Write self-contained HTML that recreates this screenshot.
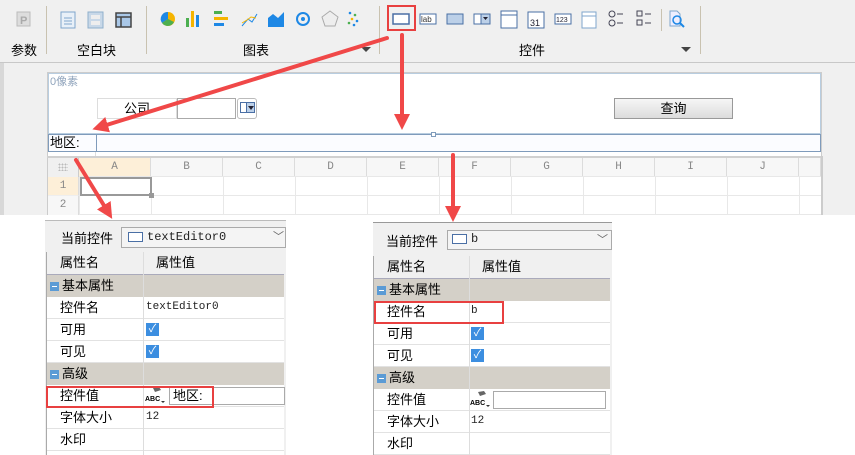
<!DOCTYPE html>
<html><head><meta charset="utf-8"><style>
*{margin:0;padding:0;box-sizing:border-box}
body{width:855px;height:455px;overflow:hidden;position:relative;background:#fff;font-family:"Liberation Sans","Noto Sans CJK SC",sans-serif;font-size:12px;color:#000}
.a{position:absolute}
.tb{left:0;top:0;width:855px;height:63px;background:#f0f0f0;border-bottom:1px solid #c8c8c8}
.vs{width:1px;background:#c9c2b0;top:6px;height:48px}
.lbl{top:40px;font-size:13px}
.cv{left:0;top:63px;width:855px;height:152px;background:#f0f0f0}
.ghd{background:#f7f7f7;color:#888;font-family:"Liberation Mono",monospace;text-align:center;line-height:19px;font-size:11px;border-right:1px solid #dcdcdc;height:19px}
.row{position:absolute;left:0;width:100%;border-bottom:1px solid #e2e2e2;line-height:21px;font-size:13px}
.grp{background:#d4d0c8;border-bottom:none}
.minus{display:inline-block;width:9px;height:9px;background:#5b9bd5;vertical-align:-1px;margin:0 3px 0 3px;position:relative}
.minus:after{content:"";position:absolute;left:2px;top:4px;width:5px;height:1px;background:#fff}
.chk{position:absolute;width:13px;height:13px;background:#3c8ee0;top:4px;color:#fff;font-size:11px;line-height:13px;text-align:center}
.mono{font-family:"Liberation Mono",monospace;font-size:11px;color:#222}
.abc{position:absolute;top:1px;width:22px;height:20px}
</style></head><body>
<div class="a tb"></div>
<div class="a vs" style="left:46px"></div>
<div class="a vs" style="left:146px"></div>
<div class="a vs" style="left:379px"></div>
<div class="a vs" style="left:700px"></div>
<div class="a vs" style="left:661px;height:22px;top:9px"></div>
<div class="a lbl" style="left:11px">参数</div>
<div class="a lbl" style="left:77px">空白块</div>
<div class="a lbl" style="left:243px">图表</div>
<div class="a lbl" style="left:519px">控件</div>
<div class="a" style="left:361px;top:47px;border:5px solid transparent;border-top:5px solid #444"></div>
<div class="a" style="left:681px;top:47px;border:5px solid transparent;border-top:5px solid #444"></div>
<svg class="a" style="left:0;top:0" width="855" height="40">
<rect x="17" y="12" width="13" height="14" fill="#ddd" stroke="#bbb"/><text x="20" y="24" font-size="11" fill="#aaa" font-weight="bold">P</text>
<rect x="61" y="12" width="14" height="16" fill="#e8f0f8" stroke="#7fa6cc"/><line x1="64" y1="18" x2="72" y2="18" stroke="#7fa6cc"/><line x1="64" y1="21" x2="72" y2="21" stroke="#7fa6cc"/><line x1="64" y1="24" x2="72" y2="24" stroke="#7fa6cc"/>
<rect x="88" y="12" width="15" height="16" fill="#c8d8e8" stroke="#8fb0cc"/><rect x="91" y="15" width="9" height="4" fill="#eee"/><rect x="91" y="21" width="9" height="4" fill="#eee"/>
<rect x="116" y="13" width="15" height="14" fill="#aac8e8" stroke="#444" stroke-width="1.5"/><line x1="116" y1="17" x2="131" y2="17" stroke="#444" stroke-width="1.5"/><line x1="121" y1="17" x2="121" y2="27" stroke="#444" stroke-width="1.5"/>
<circle cx="168" cy="19" r="7" fill="#f5b400"/><path d="M168 19 L168 12 A7 7 0 0 0 162 23 Z" fill="#1e88e5"/><path d="M168 19 L162 23 A7 7 0 0 0 174 22 Z" fill="#4caf50"/>
<rect x="186" y="18" width="3" height="9" fill="#4caf50"/><rect x="191" y="11" width="3" height="16" fill="#f5b400"/><rect x="196" y="15" width="3" height="12" fill="#1e88e5"/>
<rect x="214" y="11" width="8" height="3" fill="#4caf50"/><rect x="214" y="17" width="14" height="3" fill="#f5b400"/><rect x="214" y="23" width="10" height="3" fill="#1e88e5"/>
<path d="M242 26 L248 19 L252 22 L257 14" stroke="#1e88e5" fill="none"/><path d="M242 23 L247 20 L251 17 L256 18" stroke="#f5b400" fill="none"/>
<path d="M268 27 L268 18 L273 14 L278 18 L284 12 L284 27Z" fill="#1e88e5"/>
<circle cx="303" cy="19" r="6" fill="none" stroke="#1e88e5" stroke-width="2"/><circle cx="303" cy="19" r="2" fill="#1e88e5"/>
<polygon points="330,11 338,17 335,26 325,26 322,17" fill="#eee" stroke="#aaa"/>
<circle cx="350" cy="13" r="1.3" fill="#1e88e5"/><circle cx="355" cy="15" r="1.3" fill="#4caf50"/><circle cx="352" cy="19" r="1.3" fill="#f5b400"/><circle cx="357" cy="21" r="1.3" fill="#1e88e5"/><circle cx="349" cy="23" r="1.3" fill="#4caf50"/><circle cx="354" cy="25" r="1.3" fill="#1e88e5"/>
<rect x="393" y="14" width="16" height="10" fill="#fff" stroke="#4a6fa5" stroke-width="1.5"/>
<rect x="420" y="14" width="16" height="10" fill="#fff" stroke="#4a6fa5"/><text x="421" y="22" font-size="8" fill="#333">lab</text>
<rect x="447" y="14" width="16" height="10" fill="#bcd0e8" stroke="#4a6fa5"/>
<rect x="474" y="14" width="16" height="10" fill="#fff" stroke="#4a6fa5"/><rect x="481" y="14" width="9" height="10" fill="#bcd0e8" stroke="#4a6fa5"/><path d="M483 17 L488 17 L485.5 20Z" fill="#223"/>
<rect x="501" y="11" width="16" height="17" fill="#fff" stroke="#4a6fa5"/><line x1="501" y1="15" x2="517" y2="15" stroke="#4a6fa5"/>
<rect x="528" y="12" width="16" height="16" fill="#fff" stroke="#4a6fa5"/><text x="530" y="26" font-size="9" fill="#223">31</text>
<rect x="555" y="14" width="16" height="10" fill="#fff" stroke="#4a6fa5"/><text x="556" y="22" font-size="7" fill="#223">123</text>
<rect x="582" y="12" width="14" height="16" fill="#fff" stroke="#7fa6cc"/><line x1="582" y1="16" x2="596" y2="16" stroke="#7fa6cc"/>
<circle cx="612" cy="14" r="3" fill="none" stroke="#445"/><circle cx="612" cy="23" r="3" fill="none" stroke="#445"/><line x1="617" y1="14" x2="623" y2="14" stroke="#445"/><line x1="617" y1="23" x2="623" y2="23" stroke="#445"/>
<rect x="637" y="11" width="5" height="5" fill="none" stroke="#445"/><rect x="637" y="20" width="5" height="5" fill="none" stroke="#445"/><line x1="645" y1="14" x2="651" y2="14" stroke="#445"/><line x1="645" y1="23" x2="651" y2="23" stroke="#445"/>
<path d="M670 11 L677 11 L680 14 L680 26 L670 26Z" fill="#eef" stroke="#7fa6cc"/><circle cx="677" cy="20" r="4" fill="none" stroke="#1e88e5" stroke-width="1.5"/><line x1="680" y1="23" x2="684" y2="27" stroke="#1e88e5" stroke-width="2"/>
<rect x="388" y="6" width="27" height="24" fill="none" stroke="#e84040" stroke-width="2"/>
</svg>
<div class="a cv"></div>
<div class="a" style="left:0;top:63px;width:4px;height:152px;background:#d8d8d8"></div>
<div class="a" style="left:47px;top:72px;width:775px;height:143px;background:#fff;border:1px solid #ccc"></div>
<div class="a" style="left:48px;top:73px;width:773px;height:61px;border:1px solid #b8cde0;background:#fff"></div>
<div class="a" style="left:50px;top:73px;color:#90a4bc;font-size:11px">0像素</div>
<div class="a" style="left:97px;top:98px;width:80px;height:21px;border:1px solid #ddd;text-align:center;line-height:20px;font-size:13px">公司</div>
<div class="a" style="left:177px;top:98px;width:59px;height:21px;border:1px solid #aaa"></div>
<div class="a" style="left:237px;top:98px;width:20px;height:21px;border:1px solid #bbb;border-radius:3px"></div>
<div class="a" style="left:240px;top:102px;width:15px;height:11px;border:1px solid #4a6fa5;background:#fff"></div>
<div class="a" style="left:246px;top:102px;width:9px;height:11px;background:#bcd0e8;border:1px solid #4a6fa5"></div>
<div class="a" style="left:248px;top:106px;border:3px solid transparent;border-top:4px solid #223"></div>
<div class="a" style="left:614px;top:98px;width:119px;height:21px;border:1px solid #999;background:linear-gradient(#f6f6f6,#dcdcdc);text-align:center;line-height:19px;font-size:13px">查询</div>
<div class="a" style="left:48px;top:134px;width:773px;height:18px;border:1px solid #7f9bbb;background:#fbfcff"></div>
<div class="a" style="left:96px;top:134px;width:1px;height:18px;background:#7f9bbb"></div>
<div class="a" style="left:50px;top:134px;font-size:13px;line-height:18px">地区:</div>
<div class="a" style="left:431px;top:132px;width:5px;height:5px;border:1px solid #7f9bbb;background:#fff"></div>
<div class="a" style="left:48px;top:152px;width:48px;height:5px;border-right:1px solid #ddd"></div>
<div class="a" style="left:47px;top:156px;width:775px;height:2px;background:#d0d0d0"></div>
<div class="a" style="left:48px;top:158px;width:31px;height:19px;background:#f0f0f0;border-right:1px solid #ccc"></div>
<div class="a" style="left:58px;top:163px;width:10px;height:8px;background:radial-gradient(circle,#bbb 0.8px,transparent 1px) 0 0/3px 3px"></div>
<div class="a ghd" style="left:79px;top:158px;width:72px;background:#fdefd8;border-bottom:1px solid #f0c890">A</div>
<div class="a ghd" style="left:151px;top:158px;width:72px">B</div>
<div class="a ghd" style="left:223px;top:158px;width:72px">C</div>
<div class="a ghd" style="left:295px;top:158px;width:72px">D</div>
<div class="a ghd" style="left:367px;top:158px;width:72px">E</div>
<div class="a ghd" style="left:439px;top:158px;width:72px">F</div>
<div class="a ghd" style="left:511px;top:158px;width:72px">G</div>
<div class="a ghd" style="left:583px;top:158px;width:72px">H</div>
<div class="a ghd" style="left:655px;top:158px;width:72px">I</div>
<div class="a ghd" style="left:727px;top:158px;width:72px">J</div>
<div class="a ghd" style="left:799px;top:158px;width:22px"></div>
<div class="a ghd" style="left:48px;top:177px;width:31px;background:#fdefd8;border-bottom:1px solid #eee">1</div>
<div class="a ghd" style="left:48px;top:196px;width:31px;background:#f7f7f7">2</div>
<div class="a" style="left:79px;top:176px;width:742px;height:39px;background:linear-gradient(to right,#e8e8e8 1px,transparent 1px) 72px 0/72px 100%,linear-gradient(#e8e8e8 1px,transparent 1px) 0 19px/100% 19px"></div>
<div class="a" style="left:80px;top:177px;width:72px;height:19px;border:2px solid #999"></div>
<div class="a" style="left:149px;top:193px;width:5px;height:5px;background:#999"></div>
<div class="a" style="left:821px;top:156px;width:2px;height:59px;background:#ccc"></div>

<!-- left panel -->
<div class="a" style="left:45px;top:220px;width:241px;height:235px;background:#f0f0f0">
 <div class="a" style="left:0;top:0;width:241px;height:1px;background:#bbb"></div>
 <div class="a" style="left:16px;top:8px;font-size:13px">当前控件</div>
 <div class="a" style="left:76px;top:7px;width:165px;height:21px;border:1px solid #aaa;background:#f4f4f4"></div>
 <div class="a" style="left:83px;top:12px;width:15px;height:10px;border:1px solid #4a6fa5;background:#fff"></div>
 <div class="a mono" style="left:102px;top:10px;font-size:12px;color:#222">textEditor0</div>
 <div class="a" style="left:228px;top:8px;color:#666;font-size:11px">﹀</div>
 <div class="a" style="left:1px;top:32px;width:238px;height:203px;background:#fff;border-left:1px solid #aaa">
  <div class="row" style="top:0;height:23px;background:#f0f0f0;border-bottom:1px solid #aab;line-height:22px"><span class="a" style="left:13px">属性名</span><span class="a" style="left:109px">属性值</span></div>
  <div class="row grp" style="top:23px;height:22px"><span class="minus"></span>基本属性</div>
  <div class="row" style="top:45px;height:22px"><span class="a" style="left:13px">控件名</span><span class="a mono" style="left:99px">textEditor0</span></div>
  <div class="row" style="top:67px;height:22px"><span class="a" style="left:13px">可用</span><span class="chk" style="left:99px">✓</span></div>
  <div class="row" style="top:89px;height:22px"><span class="a" style="left:13px">可见</span><span class="chk" style="left:99px">✓</span></div>
  <div class="row grp" style="top:111px;height:22px"><span class="minus"></span>高级</div>
  <div class="row" style="top:133px;height:22px"><span class="a" style="left:13px">控件值</span>
   <svg class="abc" style="left:98px" width="22" height="20"><path d="M8 2 L14 1 L16 4 L10 6Z" fill="#666"/><text x="0" y="15" font-size="7" font-weight="bold" font-family="Liberation Sans">ABC</text><path d="M16 15 L20 15 L18 17Z" fill="#333"/></svg>
   <span class="a" style="left:122px;top:2px;width:116px;height:18px;border:1px solid #aaa;line-height:16px;padding-left:3px">地区:</span></div>
  <div class="row" style="top:155px;height:22px"><span class="a" style="left:13px">字体大小</span><span class="a mono" style="left:99px">12</span></div>
  <div class="row" style="top:177px;height:22px"><span class="a" style="left:13px">水印</span></div>
  <div class="a" style="left:96px;top:0;width:1px;height:203px;background:#ddd"></div>
 </div>
 <div class="a" style="left:1px;top:166px;width:168px;height:22px;border:2px solid #e84040"></div>
</div>

<!-- right panel -->
<div class="a" style="left:373px;top:222px;width:239px;height:233px;background:#f0f0f0">
 <div class="a" style="left:0;top:0;width:239px;height:1px;background:#999"></div>
 <div class="a" style="left:13px;top:9px;font-size:13px">当前控件</div>
 <div class="a" style="left:74px;top:8px;width:165px;height:20px;border:1px solid #aaa;background:#f4f4f4"></div>
 <div class="a" style="left:79px;top:12px;width:15px;height:10px;border:1px solid #4a6fa5;background:#fff"></div>
 <div class="a mono" style="left:98px;top:10px;font-size:12px">b</div>
 <div class="a" style="left:224px;top:9px;color:#666;font-size:11px">﹀</div>
 <div class="a" style="left:0;top:34px;width:237px;height:199px;background:#fff;border-left:1px solid #aaa">
  <div class="row" style="top:0;height:23px;background:#f0f0f0;border-bottom:1px solid #aab;line-height:22px"><span class="a" style="left:13px">属性名</span><span class="a" style="left:108px">属性值</span></div>
  <div class="row grp" style="top:23px;height:22px"><span class="minus"></span>基本属性</div>
  <div class="row" style="top:45px;height:22px"><span class="a" style="left:13px">控件名</span><span class="a mono" style="left:97px">b</span></div>
  <div class="row" style="top:67px;height:22px"><span class="a" style="left:13px">可用</span><span class="chk" style="left:97px">✓</span></div>
  <div class="row" style="top:89px;height:22px"><span class="a" style="left:13px">可见</span><span class="chk" style="left:97px">✓</span></div>
  <div class="row grp" style="top:111px;height:22px"><span class="minus"></span>高级</div>
  <div class="row" style="top:133px;height:22px"><span class="a" style="left:13px">控件值</span>
   <svg class="abc" style="left:96px" width="22" height="20"><path d="M8 2 L14 1 L16 4 L10 6Z" fill="#666"/><text x="0" y="15" font-size="7" font-weight="bold" font-family="Liberation Sans">ABC</text><path d="M16 15 L20 15 L18 17Z" fill="#333"/></svg>
   <span class="a" style="left:119px;top:2px;width:113px;height:18px;border:1px solid #aaa"></span></div>
  <div class="row" style="top:155px;height:22px"><span class="a" style="left:13px">字体大小</span><span class="a mono" style="left:97px">12</span></div>
  <div class="row" style="top:177px;height:22px"><span class="a" style="left:13px">水印</span></div>
  <div class="a" style="left:95px;top:0;width:1px;height:199px;background:#ddd"></div>
 </div>
 <div class="a" style="left:1px;top:79px;width:130px;height:23px;border:2px solid #e84040"></div>
</div>

<svg class="a" style="left:0;top:0" width="855" height="455">
<defs><marker id="m" markerWidth="4" markerHeight="4" refX="2" refY="2" orient="auto" markerUnits="strokeWidth"><path d="M0 0 L4 2 L0 4Z" fill="#f04848"/></marker></defs>
<g stroke="#f04848" stroke-width="4" fill="none" marker-end="url(#m)" stroke-linecap="round">
<line x1="387" y1="38" x2="100" y2="127"/>
<line x1="402" y1="35" x2="402" y2="122"/>
<line x1="76" y1="160" x2="108" y2="212"/>
<line x1="453" y1="155" x2="453" y2="214"/>
</g></svg>
</body></html>
